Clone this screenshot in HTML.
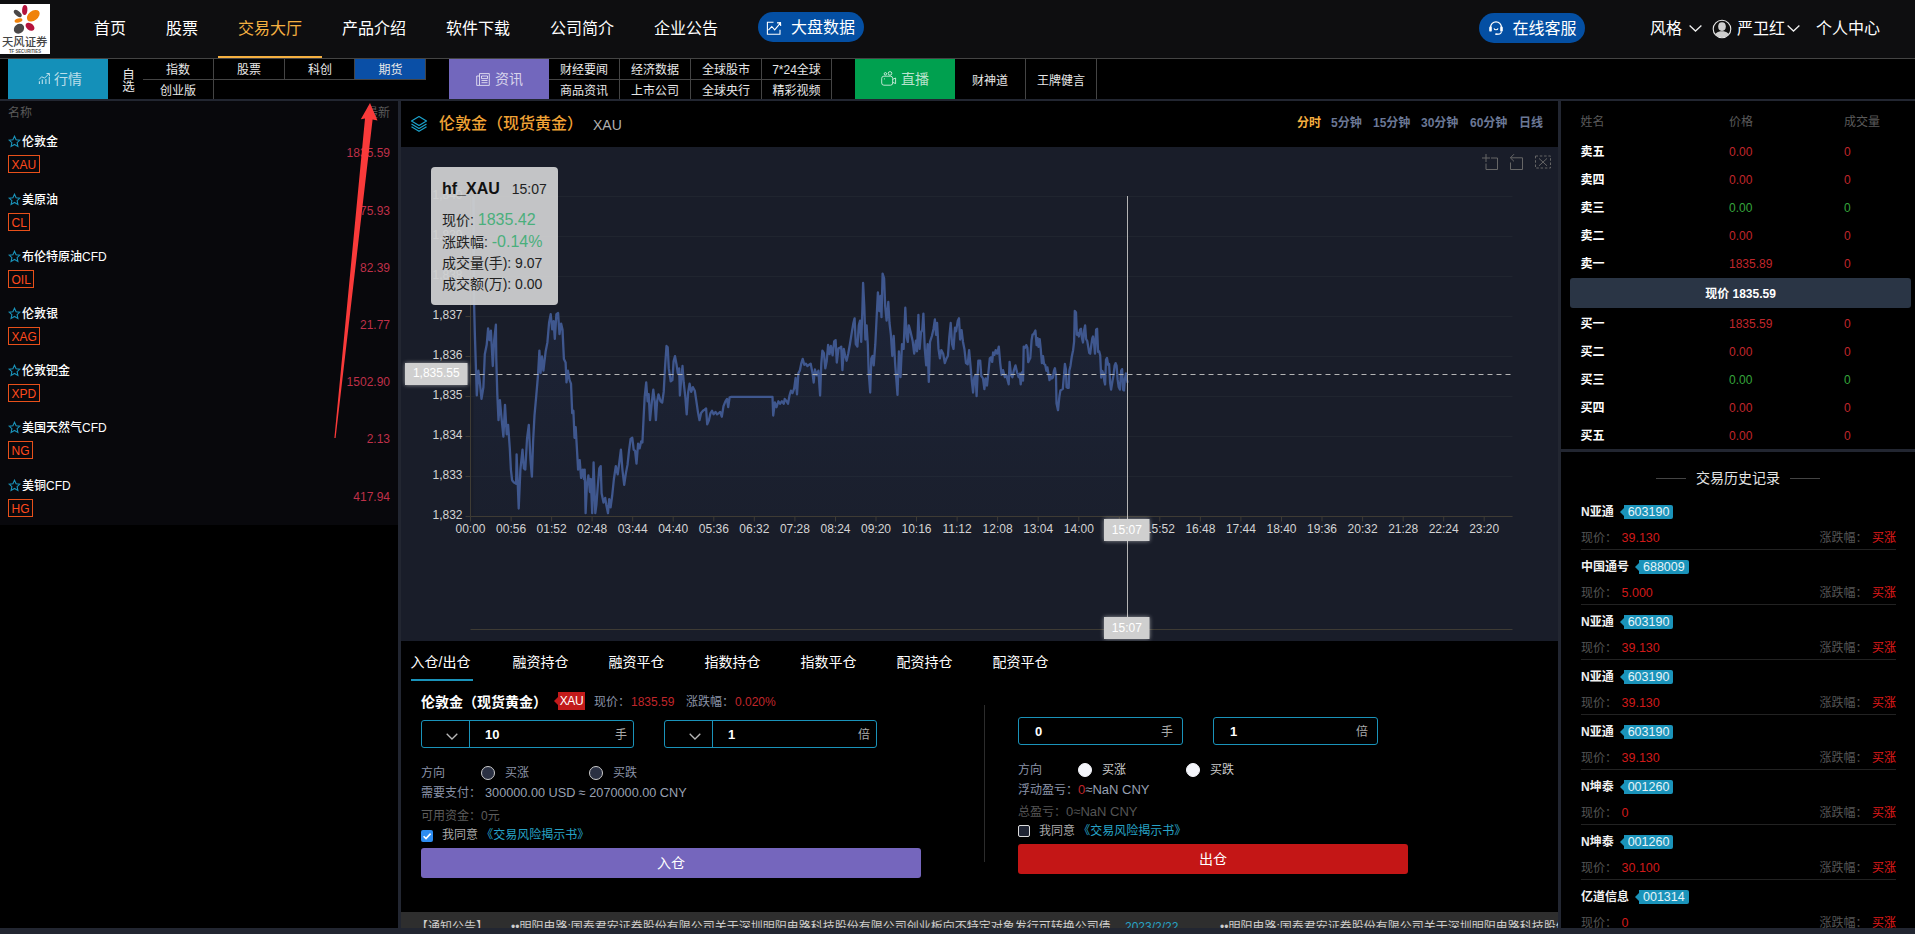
<!DOCTYPE html>
<html lang="zh-CN">
<head>
<meta charset="utf-8">
<title>交易大厅</title>
<style>
*{box-sizing:border-box;margin:0;padding:0}
html,body{width:1915px;height:934px;overflow:hidden;background:#000}
body{font-family:"Liberation Sans","Noto Sans CJK SC",sans-serif;color:#fff;font-size:13px;position:relative}
.abs{position:absolute}
/* header */
#hd{position:absolute;left:0;top:0;width:1915px;height:59px;background:#0e0e10;border-bottom:1px solid #444}
#logo{position:absolute;left:0;top:4px}
.nav{position:absolute;top:0;height:58px;line-height:57px;font-size:16px;color:#fff;text-align:center;white-space:nowrap}
.nav.on{color:#f5b041;border-bottom:2px solid #f5b041}
.pill{position:absolute;background:#044fa3;border-radius:15px;color:#fff;font-size:16px;white-space:nowrap}
/* subnav */
#sub{position:absolute;left:0;top:59px;width:1915px;height:40px;background:#000}
.blk{position:absolute;top:0;height:40px;width:100px;line-height:40px;text-align:center;font-size:14px;color:rgba(255,255,255,.72)}
.cell{position:absolute;height:20px;line-height:22px;font-size:12px;color:#e8e8e8;text-align:center;white-space:nowrap}
.ln{position:absolute;background:#444}
.ic{position:absolute}
.vt{position:absolute;font-size:12.5px;line-height:12px;color:#e8e8e8;width:13px;text-align:center}

.it{position:absolute;left:0;width:398px;height:57px}
.it .st{position:absolute;left:8px;top:8px}
.it .nm{position:absolute;left:22px;top:6px;font-size:12px;line-height:18px;color:#fff;font-weight:500;white-space:nowrap}
.it .cd{position:absolute;left:8px;top:28px;height:18px;line-height:18px;padding:0 2.5px;border:1px solid #e8501a;color:#ff4a1c;font-size:12px}
.it .pr{position:absolute;right:8px;top:17px;font-size:12px;line-height:18px;color:#bf3049}
.tf{position:absolute;top:12px;font-size:12px;line-height:20px;font-weight:700;color:#6b7896;white-space:nowrap}

.tab{position:absolute;top:10px;font-size:14px;line-height:22px;color:#fff;white-space:nowrap}
.lbl{color:#8a93a8;font-size:12px;white-space:nowrap}
.inp{position:absolute;height:28px;border:1px solid #1a93ba;border-radius:3px}
.inp i{position:absolute;top:0;width:1px;height:26px;background:#1a93ba}
.inp b{position:absolute;top:4px;font-size:13px;line-height:20px;color:#fff;font-weight:700}
.inp em{position:absolute;right:6px;top:4px;font-style:normal;font-size:12px;line-height:20px;color:#aaa}
.rd{position:absolute;width:14px;height:14px;border-radius:50%;background:#2a3042;border:1px solid #ccc}
.rd.w{background:#f4f5fa;border-color:#f4f5fa}

.or{position:absolute;left:0;width:354px;height:20px;line-height:20px;font-size:12px}
.or span{position:absolute;top:0;white-space:nowrap}
.or .o1{left:19.5px;color:#fff;font-weight:700}
.or .o2{left:168px}.or .o3{left:283px}
.or.r{color:#c0262b}.or.g{color:#35a53c}
.hi{position:absolute;left:20px;width:315px;height:51px;border-bottom:1px solid #222}
.hi .h1{position:absolute;left:0;top:3px;line-height:20px;white-space:nowrap}
.hi .h1 b{font-size:12px;color:#f0f0f0}
.hi .tg{position:relative;display:inline-block;margin-left:10px;height:14px;line-height:14px;padding:0 4px;background:#1a93ba;color:#e8f4f8;font-size:12.5px;vertical-align:middle;top:-1px;border-radius:0 2px 2px 0}
.hi .tg:before{content:"";position:absolute;left:-4px;top:3px;border-top:4px solid transparent;border-bottom:4px solid transparent;border-right:4px solid #1a93ba}
.hi .h2{position:absolute;left:0;top:29px;width:315px;line-height:20px;color:#555;font-size:12px;white-space:nowrap}
.hi .h2 em{font-style:normal;color:#d01a1a;font-size:12.5px;position:absolute;left:40.5px}
.hi .h2 u{text-decoration:none;position:absolute;right:0}
.hi .h2 i{font-style:normal;color:#e01a1a;margin-left:4.5px}
/* frame */
.fr{position:absolute;background:#222631}
</style>
</head>
<body>
<!-- HEADER -->
<div id="hd">
  <svg id="logo" viewBox="0 0 200 200" width="50" height="50">
    <rect width="200" height="200" fill="#fff"/>
    <ellipse cx="99" cy="24" rx="10.5" ry="20" fill="#b5123c" transform="rotate(4 99 24)"/>
    <ellipse cx="71" cy="38" rx="19" ry="10" fill="#4a4747" transform="rotate(42 71 38)"/>
    <ellipse cx="133" cy="47" rx="29" ry="19" fill="#f0820a" transform="rotate(-38 133 47)"/>
    <ellipse cx="74" cy="66" rx="16" ry="8" fill="#f0820a" transform="rotate(-14 74 66)"/>
    <ellipse cx="76" cy="99" rx="22" ry="18.5" fill="#4a4747" transform="rotate(-40 76 99)"/>
    <ellipse cx="120" cy="91" rx="20" ry="13.5" fill="#b5123c" transform="rotate(38 120 91)"/>
    <text x="99" y="167" font-size="44" font-weight="500" fill="#444" text-anchor="middle" font-family="'Liberation Sans','Noto Sans CJK SC',sans-serif" textLength="182" lengthAdjust="spacingAndGlyphs">天风证券</text>
    <text x="100" y="195" font-size="19" font-weight="700" fill="#555" text-anchor="middle" font-family="'Liberation Sans',sans-serif" textLength="128" lengthAdjust="spacingAndGlyphs">TF SECURITIES</text>
  </svg>
  <div class="nav" style="left:74px;width:72px">首页</div>
  <div class="nav" style="left:146px;width:72px">股票</div>
  <div class="nav on" style="left:218px;width:104px">交易大厅</div>
  <div class="nav" style="left:322px;width:104px">产品介绍</div>
  <div class="nav" style="left:426px;width:104px">软件下载</div>
  <div class="nav" style="left:530px;width:104px">公司简介</div>
  <div class="nav" style="left:634px;width:104px">企业公告</div>
  <div class="pill" style="left:758px;top:12px;width:106px;height:30px;line-height:31px;padding-left:33px"><svg class="ic" style="left:8px;top:8.5px" width="16" height="15" viewBox="0 0 16 15"><path d="M7.5 1.3H1.4V13.3H14V8.8" fill="none" stroke="#fff" stroke-width="1.1"/><path d="M2.4 9.2L5.8 5.5 8.7 8.8 14.3 2.2M11 1.9L14.5 1.7 14.7 5" fill="none" stroke="#fff" stroke-width="1.1"/></svg>大盘数据</div>
  <div class="pill" style="left:1479px;top:13px;width:106px;height:30px;line-height:31px;padding-left:33.5px"><svg class="ic" style="left:9px;top:7px" width="16" height="16" viewBox="0 0 16 16"><path d="M2.6 8.2V7.2a5.4 5.4 0 0 1 10.8 0v1" fill="none" stroke="#fff" stroke-width="1.3"/><rect x="1.2" y="6.6" width="2.6" height="5" rx="1.2" fill="#fff"/><rect x="12.2" y="6.6" width="2.6" height="5" rx="1.2" fill="#fff"/><path d="M13.4 11.4c0 2-2 2.8-4.4 2.8" fill="none" stroke="#fff" stroke-width="1.1"/><ellipse cx="8.4" cy="14.1" rx="1.4" ry=".9" fill="#fff"/><path d="M6 8.3c.5 2 3.5 2 4 0" fill="none" stroke="#fff" stroke-width="1.1"/></svg>在线客服</div>
  <div class="nav" style="left:1650px">风格</div>
  <svg class="ic" style="left:1689px;top:25px" width="13" height="7" viewBox="0 0 13 7"><path d="M.6 .6L6.5 6 12.4 .6" fill="none" stroke="#eee" stroke-width="1.3"/></svg>
  <svg class="ic" style="left:1712px;top:18.5px" width="20" height="20" viewBox="0 0 20 20"><defs><clipPath id="av"><circle cx="10" cy="10" r="8.6"/></clipPath></defs><circle cx="10" cy="10" r="8.8" fill="#111" stroke="#e8e8e8" stroke-width="1.1"/><g clip-path="url(#av)" fill="#cfcfcf"><ellipse cx="10" cy="7.6" rx="3.8" ry="4.3"/><path d="M2 19.5c.3-5 2.800-7.300 8-7.300s7.700 2.300 8 7.300z"/></g></svg>
  <div class="nav" style="left:1737px">严卫红</div>
  <svg class="ic" style="left:1787px;top:25px" width="13" height="7" viewBox="0 0 13 7"><path d="M.6 .6L6.5 6 12.4 .6" fill="none" stroke="#eee" stroke-width="1.3"/></svg>
  <div class="nav" style="left:1816px">个人中心</div>
</div>
<!-- SUBNAV -->
<div id="sub">
  <div class="blk" style="left:8px;background:#1490b9"><svg class="ic" width="13" height="12" viewBox="0 0 13 12" style="left:30px;top:14px"><path d="M1.4 8.300V10.900M4.300 6.400V10.900M7.900 6.100V10.900M11.300 3.800V10.900" stroke="currentColor" stroke-width="1.1" fill="none"/><path d="M1.100 6.500L3.600 3.800 6.600 5.100 11.100 .6M8.500 .5H11.300L11.500 3.100" stroke="currentColor" stroke-width="1" fill="none"/></svg><span style="margin-left:20px">行情</span></div>
  <div class="vt" style="left:122px;top:9.5px">自<br>选</div>
  <div class="cell" style="left:143px;top:0;width:70px">指数</div>
  <div class="cell" style="left:143px;top:21px;width:70px">创业版</div>
  <div class="cell" style="left:214px;top:0;width:70px">股票</div>
  <div class="cell" style="left:285px;top:0;width:70px">科创</div>
  <div class="cell" style="left:355px;top:0;width:71px;background:#0a4fa6">期货</div>
  <div class="ln" style="left:143px;top:20px;width:283px;height:1px"></div>
  <div class="ln" style="left:213px;top:0;width:1px;height:40px"></div>
  <div class="ln" style="left:284px;top:0;width:1px;height:20px"></div>
  <div class="ln" style="left:354px;top:0;width:1px;height:20px"></div>
  <div class="ln" style="left:425px;top:0;width:1px;height:20px"></div>

  <div class="blk" style="left:449px;background:#7267bd"><svg class="ic" width="14" height="13" viewBox="0 0 14 13" style="left:27px;top:14px"><path d="M3.5 .6h9.8v11.8H.7V3h2.8zM3.5 3v9" stroke="currentColor" stroke-width="1" fill="none"/><path d="M5.5 3h6v2.6h-6zM5.5 7.5h6M5.5 9.7h6" stroke="currentColor" stroke-width="1" fill="none"/></svg><span style="margin-left:20px">资讯</span></div>
  <div class="cell" style="left:549px;top:0;width:70px">财经要闻</div>
  <div class="cell" style="left:549px;top:21px;width:70px">商品资讯</div>
  <div class="cell" style="left:620px;top:0;width:70px">经济数据</div>
  <div class="cell" style="left:620px;top:21px;width:70px">上市公司</div>
  <div class="cell" style="left:691px;top:0;width:70px">全球股市</div>
  <div class="cell" style="left:691px;top:21px;width:70px">全球央行</div>
  <div class="cell" style="left:762px;top:0;width:69px">7*24全球</div>
  <div class="cell" style="left:762px;top:21px;width:69px">精彩视频</div>
  <div class="ln" style="left:549px;top:20px;width:283px;height:1px"></div>
  <div class="ln" style="left:619px;top:0;width:1px;height:40px"></div>
  <div class="ln" style="left:690px;top:0;width:1px;height:40px"></div>
  <div class="ln" style="left:761px;top:0;width:1px;height:40px"></div>
  <div class="ln" style="left:831px;top:0;width:1px;height:40px"></div>

  <div class="blk" style="left:855px;background:#00a04f"><svg class="ic" width="16" height="15" viewBox="0 0 16 15" style="left:26px;top:11.5px"><circle cx="4.400" cy="2.800" r="1.200" stroke="currentColor" fill="none"/><circle cx="9" cy="2.400" r="1.800" stroke="currentColor" fill="none"/><rect x=".7" y="5.200" width="11" height="9" rx="2.200" stroke="currentColor" fill="none"/><path d="M11.700 8.300L14.600 7V12.600L11.700 11.300" stroke="currentColor" fill="none" stroke-linejoin="round"/><circle cx="3.400" cy="7.800" r=".6" fill="currentColor"/></svg><span style="margin-left:20px">直播</span></div>
  <div class="cell" style="left:955px;top:11px;width:70px">财神道</div>
  <div class="cell" style="left:1026px;top:11px;width:70px">王牌健言</div>
  <div class="ln" style="left:1025px;top:0;width:1px;height:40px"></div>
  <div class="ln" style="left:1096px;top:0;width:1px;height:40px"></div>
</div>
<!-- FRAME LINES -->
<div class="fr" style="left:0;top:99px;width:1915px;height:2px"></div>
<div class="fr" style="left:398px;top:99px;width:3px;height:829px"></div>
<div class="fr" style="left:1558px;top:99px;width:3px;height:829px"></div>
<div class="fr" style="left:0;top:928px;width:1915px;height:6px"></div>
<!-- LEFT -->
<div id="left" class="abs" style="left:0;top:101px;width:398px;height:424px;background:#08080c">
  <div class="abs" style="left:8px;top:4px;font-size:12px;line-height:16px;color:#5a5a5a">名称</div>
  <div class="abs" style="right:8px;top:4px;font-size:12px;line-height:16px;color:#5a5a5a">最新</div>
  <div class="it" style="top:26.4px"><svg class="st" width="13" height="13" viewBox="0 0 13 13"><path d="M6.5 1.2l1.6 3.5 3.8.4-2.8 2.6.8 3.8-3.4-2-3.4 2 .8-3.8L1.1 5.1l3.8-.4z" fill="none" stroke="#1a93ba" stroke-width="1.1" stroke-linejoin="miter"/></svg><span class="nm">伦敦金</span><span class="cd">XAU</span><span class="pr">1835.59</span></div>
  <div class="it" style="top:83.6px"><svg class="st" width="13" height="13" viewBox="0 0 13 13"><path d="M6.5 1.2l1.6 3.5 3.8.4-2.8 2.6.8 3.8-3.4-2-3.4 2 .8-3.8L1.1 5.1l3.8-.4z" fill="none" stroke="#1a93ba" stroke-width="1.1" stroke-linejoin="miter"/></svg><span class="nm">美原油</span><span class="cd">CL</span><span class="pr">75.93</span></div>
  <div class="it" style="top:140.8px"><svg class="st" width="13" height="13" viewBox="0 0 13 13"><path d="M6.5 1.2l1.6 3.5 3.8.4-2.8 2.6.8 3.8-3.4-2-3.4 2 .8-3.8L1.1 5.1l3.8-.4z" fill="none" stroke="#1a93ba" stroke-width="1.1" stroke-linejoin="miter"/></svg><span class="nm">布伦特原油CFD</span><span class="cd">OIL</span><span class="pr">82.39</span></div>
  <div class="it" style="top:198.0px"><svg class="st" width="13" height="13" viewBox="0 0 13 13"><path d="M6.5 1.2l1.6 3.5 3.8.4-2.8 2.6.8 3.8-3.4-2-3.4 2 .8-3.8L1.1 5.1l3.8-.4z" fill="none" stroke="#1a93ba" stroke-width="1.1" stroke-linejoin="miter"/></svg><span class="nm">伦敦银</span><span class="cd">XAG</span><span class="pr">21.77</span></div>
  <div class="it" style="top:255.2px"><svg class="st" width="13" height="13" viewBox="0 0 13 13"><path d="M6.5 1.2l1.6 3.5 3.8.4-2.8 2.6.8 3.8-3.4-2-3.4 2 .8-3.8L1.1 5.1l3.8-.4z" fill="none" stroke="#1a93ba" stroke-width="1.1" stroke-linejoin="miter"/></svg><span class="nm">伦敦钯金</span><span class="cd">XPD</span><span class="pr">1502.90</span></div>
  <div class="it" style="top:312.4px"><svg class="st" width="13" height="13" viewBox="0 0 13 13"><path d="M6.5 1.2l1.6 3.5 3.8.4-2.8 2.6.8 3.8-3.4-2-3.4 2 .8-3.8L1.1 5.1l3.8-.4z" fill="none" stroke="#1a93ba" stroke-width="1.1" stroke-linejoin="miter"/></svg><span class="nm">美国天然气CFD</span><span class="cd">NG</span><span class="pr">2.13</span></div>
  <div class="it" style="top:369.6px"><svg class="st" width="13" height="13" viewBox="0 0 13 13"><path d="M6.5 1.2l1.6 3.5 3.8.4-2.8 2.6.8 3.8-3.4-2-3.4 2 .8-3.8L1.1 5.1l3.8-.4z" fill="none" stroke="#1a93ba" stroke-width="1.1" stroke-linejoin="miter"/></svg><span class="nm">美铜CFD</span><span class="cd">HG</span><span class="pr">417.94</span></div>
</div>
<svg class="abs" style="left:320px;top:100px" width="70" height="345" viewBox="320 100 70 345"><polygon points="370,103 377.5,120.5 372.6,119.6 335.6,438 334.4,438 365,118.6 360.8,119.2" fill="#f93a3a"/></svg>
<!-- CENTER -->
<div id="ctitle" class="abs" style="left:401px;top:101px;width:1157px;height:46px;background:#000">
  <svg class="abs" style="left:9px;top:14px" width="18" height="18" viewBox="0 0 18 18"><path d="M9 1.5L16.5 6 9 10.5 1.5 6z" fill="none" stroke="#1ba3cc" stroke-width="1.2" stroke-linejoin="round"/><path d="M1.5 9L9 13.5 16.5 9M1.5 11.8L9 16.3 16.5 11.8" fill="none" stroke="#1ba3cc" stroke-width="1.2" stroke-linejoin="round"/></svg>
  <div class="abs" style="left:38px;top:11px;font-size:16px;line-height:24px;color:#f0a335;font-weight:500;white-space:nowrap">伦敦金（现货黄金）</div>
  <div class="abs" style="left:192px;top:12px;font-size:14px;line-height:24px;color:#b0b0b0">XAU</div>
  <div class="tf" style="left:896px;color:#f7b040">分时</div>
  <div class="tf" style="left:930px">5分钟</div>
  <div class="tf" style="left:972px">15分钟</div>
  <div class="tf" style="left:1020px">30分钟</div>
  <div class="tf" style="left:1069px">60分钟</div>
  <div class="tf" style="left:1118px">日线</div>
</div>
<div id="chart" class="abs" style="left:401px;top:147px;width:1157px;height:494px;background:#191d29"></div>
<svg class="abs" style="left:401px;top:147px" width="1157" height="494" viewBox="401 147 1157 494" font-family="'Liberation Sans','Noto Sans CJK SC',sans-serif" font-size="12">
<defs><linearGradient id="ag" x1="0" y1="0" x2="0" y2="1"><stop offset="0" stop-color="#3a5490" stop-opacity=".30"/><stop offset=".35" stop-color="#2e4478" stop-opacity=".17"/><stop offset="1" stop-color="#2a3c66" stop-opacity=".07"/></linearGradient></defs>
<path d="M470.5 196.5H1512.5" stroke="#20252f" stroke-width="1"/>
<path d="M470.5 236.5H1512.5" stroke="#20252f" stroke-width="1"/>
<path d="M470.5 276.5H1512.5" stroke="#20252f" stroke-width="1"/>
<path d="M470.5 316.5H1512.5" stroke="#20252f" stroke-width="1"/>
<path d="M470.5 356.5H1512.5" stroke="#20252f" stroke-width="1"/>
<path d="M470.5 396.5H1512.5" stroke="#20252f" stroke-width="1"/>
<path d="M470.5 436.5H1512.5" stroke="#20252f" stroke-width="1"/>
<path d="M470.5 476.5H1512.5" stroke="#20252f" stroke-width="1"/>
<path d="M470.5 516.5H1512.5" stroke="#20252f" stroke-width="1"/>
<path d="M465.5 196.5H470.5" stroke="#3e3b34"/>
<text x="462.5" y="199.4" text-anchor="end" fill="#d4d4d4">1,840</text>
<path d="M465.5 236.5H470.5" stroke="#3e3b34"/>
<text x="462.5" y="239.4" text-anchor="end" fill="#d4d4d4">1,839</text>
<path d="M465.5 276.5H470.5" stroke="#3e3b34"/>
<text x="462.5" y="279.4" text-anchor="end" fill="#d4d4d4">1,838</text>
<path d="M465.5 316.5H470.5" stroke="#3e3b34"/>
<text x="462.5" y="319.4" text-anchor="end" fill="#d4d4d4">1,837</text>
<path d="M465.5 356.5H470.5" stroke="#3e3b34"/>
<text x="462.5" y="359.4" text-anchor="end" fill="#d4d4d4">1,836</text>
<path d="M465.5 396.5H470.5" stroke="#3e3b34"/>
<text x="462.5" y="399.4" text-anchor="end" fill="#d4d4d4">1,835</text>
<path d="M465.5 436.5H470.5" stroke="#3e3b34"/>
<text x="462.5" y="439.4" text-anchor="end" fill="#d4d4d4">1,834</text>
<path d="M465.5 476.5H470.5" stroke="#3e3b34"/>
<text x="462.5" y="479.4" text-anchor="end" fill="#d4d4d4">1,833</text>
<path d="M465.5 516.5H470.5" stroke="#3e3b34"/>
<text x="462.5" y="519.4" text-anchor="end" fill="#d4d4d4">1,832</text>
<path d="M470.5 196V516.5" stroke="#3e3b34"/>
<path d="M470.5 516.5H1512.5" stroke="#3e3b34"/>
<path d="M470.5 629.5H1512.5" stroke="#3e3b34"/>
<polygon points="473.5,516 473.5,196.3 474.0,300.0 474.9,335.3 476.8,395.4 478.4,370.7 479.6,380.1 481.5,398.9 483.4,387.2 484.8,354.2 486.7,344.8 488.1,328.3 489.5,340.0 490.9,330.6 492.8,366.0 494.2,340.0 495.9,324.7 496.3,358.9 497.3,394.2 498.5,420.1 499.9,400.1 501.5,417.8 503.4,436.6 505.0,404.8 506.7,434.3 508.1,424.9 509.8,448.4 510.9,469.6 512.1,480.2 514.0,482.6 516.1,483.7 516.6,454.3 518.7,508.5 520.4,469.6 522.5,449.6 523.9,468.4 525.3,469.6 527.0,439.0 528.8,424.9 530.5,460.2 531.9,476.7 533.1,441.3 534.5,415.4 536.4,394.2 538.0,375.4 539.4,350.6 540.6,373.0 542.0,356.5 543.4,370.7 545.6,351.8 547.4,342.4 549.1,322.4 550.7,314.1 552.2,329.4 553.6,321.2 554.8,338.9 556.4,314.1 558.1,313.0 559.5,334.2 561.1,323.6 562.5,329.4 563.9,358.9 565.6,362.4 566.5,382.4 567.9,370.7 569.6,380.1 571.0,383.6 572.2,413.1 573.4,410.7 574.5,437.8 575.7,427.2 576.9,448.4 578.1,469.6 579.7,460.2 581.1,477.9 582.8,469.6 584.0,479.0 584.7,469.6 585.6,513.2 587.0,483.7 588.4,475.5 589.9,492.0 590.8,479.0 592.2,513.2 593.6,462.5 595.3,513.2 596.4,504.9 597.6,488.5 599.3,468.4 600.7,466.1 601.6,493.2 603.5,502.6 605.2,497.9 606.3,504.9 608.0,513.2 609.2,499.1 610.6,507.3 612.2,495.5 613.9,479.0 615.8,466.1 617.7,474.3 619.3,462.5 620.9,449.6 622.4,469.6 624.2,484.9 625.9,473.1 627.5,464.9 629.0,450.8 630.6,439.0 632.3,437.8 633.7,449.6 635.1,450.8 636.5,463.7 638.1,443.7 639.6,448.4 641.2,441.3 642.4,442.5 643.6,417.8 644.7,396.6 646.2,382.4 647.6,401.3 648.7,394.2 650.0,420.2 651.9,401.3 653.3,389.6 654.7,401.3 655.9,420.2 657.1,401.3 658.5,394.3 660.6,401.3 662.2,402.5 663.7,391.9 665.1,366.0 666.5,346.0 667.7,347.2 668.8,368.4 670.7,381.3 672.4,380.1 673.6,361.3 675.0,356.1 676.4,363.7 677.8,373.1 679.2,368.4 679.9,395.5 681.3,377.8 682.5,366.0 683.7,382.5 685.3,396.6 686.7,414.3 688.2,391.9 689.6,383.7 691.2,391.9 692.9,387.2 694.8,390.7 696.4,401.3 698.1,413.1 699.5,420.2 701.1,413.1 703.0,410.8 704.7,409.6 706.1,408.4 707.2,424.4 708.9,420.2 710.5,413.1 712.0,410.8 713.6,414.3 715.5,411.9 717.1,414.3 718.8,413.1 720.2,411.9 721.8,416.7 723.5,406.1 725.4,401.3 727.0,399.0 728.2,407.2 729.6,397.3 731.3,396.9 772.5,396.9 773.2,415.5 774.9,402.5 776.5,407.2 778.4,401.3 780.0,403.7 781.9,401.3 783.8,403.7 784.7,399.0 786.6,401.3 788.0,403.7 789.5,395.5 790.9,390.7 792.5,393.1 794.2,388.4 795.6,377.8 797.0,394.3 798.4,373.1 799.8,370.7 801.2,363.7 802.7,358.9 804.3,364.8 805.9,363.7 807.4,366.0 809.0,364.8 810.7,363.7 812.5,373.1 813.7,382.5 814.9,369.5 816.8,375.4 818.4,370.7 820.1,395.5 821.3,363.7 822.4,350.7 823.9,353.1 825.3,368.4 826.7,361.3 828.1,344.8 829.5,354.2 830.9,346.0 832.6,355.4 834.2,341.3 835.6,340.1 836.8,362.5 838.5,348.3 840.0,347.8 841.2,346.6 842.4,370.1 843.8,348.9 845.2,356.0 846.6,360.7 848.2,353.7 849.9,344.2 851.8,332.4 853.4,323.0 854.6,318.3 855.8,344.2 857.4,346.6 858.8,325.4 860.0,320.7 861.2,341.9 862.4,308.9 863.1,283.0 864.3,306.5 865.4,339.5 866.6,325.4 867.8,344.2 868.7,372.5 870.2,392.5 871.3,358.4 872.5,356.0 873.7,365.4 875.3,344.2 876.7,316.0 877.9,292.4 879.3,311.2 880.5,295.9 881.5,317.1 882.6,273.6 884.1,278.3 885.2,306.5 886.6,320.7 888.3,301.8 889.5,323.0 890.9,334.8 892.3,356.0 893.7,336.0 895.1,363.1 896.5,381.9 897.5,394.9 898.9,351.3 900.5,377.2 902.0,344.2 903.6,348.9 905.3,307.7 906.7,337.2 907.8,341.9 908.8,325.4 910.7,332.4 912.6,340.7 914.2,353.7 915.9,340.7 917.0,351.3 918.4,314.8 919.6,348.9 921.0,332.4 922.2,330.1 923.4,313.6 924.8,348.9 926.2,365.4 927.6,344.2 928.8,381.9 930.0,341.9 931.9,336.0 933.5,328.9 934.9,319.5 936.1,334.8 937.1,323.0 938.5,348.9 939.9,358.4 941.3,350.1 943.2,353.7 944.8,363.1 946.5,358.4 947.9,356.0 949.3,337.2 950.7,323.0 952.1,344.2 953.5,348.9 955.0,327.7 956.1,331.3 957.8,320.7 959.0,318.3 960.1,339.5 961.6,330.1 963.0,341.9 964.4,348.9 966.0,363.1 967.7,364.3 969.1,350.1 970.7,367.8 971.9,381.9 973.1,392.5 974.3,377.2 975.5,374.9 976.6,396.1 978.3,360.7 980.2,360.7 981.3,376.0 983.0,378.4 984.4,389.0 985.6,378.4 987.0,385.5 988.4,372.5 989.8,358.4 991.0,357.2 992.2,361.9 993.1,352.5 994.5,354.8 995.7,350.1 997.1,353.7 998.8,346.6 1000.2,363.1 1001.6,374.9 1003.0,370.1 1004.9,377.2 1006.3,374.9 1007.5,379.6 1008.7,384.3 1009.6,361.9 1011.0,374.9 1012.4,377.2 1013.9,370.1 1015.5,365.4 1017.1,372.5 1018.6,377.2 1019.7,373.7 1020.7,384.3 1021.9,372.5 1023.0,380.7 1023.7,346.6 1023.8,346.8 1025.1,347.7 1026.3,345.1 1027.4,347.7 1028.2,362.2 1029.4,359.7 1030.3,357.9 1031.6,340.0 1032.5,334.8 1033.7,334.0 1035.4,330.5 1036.6,345.1 1037.6,338.2 1038.5,346.8 1039.7,339.1 1040.7,348.5 1041.9,363.1 1043.0,356.2 1044.0,363.9 1045.2,364.8 1046.4,370.8 1047.4,367.4 1048.4,373.4 1049.5,380.2 1050.5,375.9 1051.7,378.5 1052.9,377.6 1053.9,370.8 1054.9,368.2 1056.0,375.9 1056.5,403.3 1058.0,410.2 1059.4,396.5 1060.4,390.5 1061.8,389.6 1062.8,388.8 1063.9,375.9 1064.9,363.9 1065.9,369.1 1066.6,387.1 1067.6,387.9 1068.7,387.9 1069.3,370.8 1070.5,365.7 1071.7,357.1 1073.1,350.2 1074.1,341.7 1074.8,310.8 1076.0,312.5 1076.9,334.8 1077.9,333.1 1078.9,336.5 1080.0,329.7 1081.0,328.8 1082.0,338.2 1083.0,342.5 1084.2,329.7 1085.1,325.4 1086.1,339.1 1087.2,340.8 1088.2,346.8 1089.2,352.8 1090.2,353.7 1091.3,345.1 1092.3,338.2 1093.0,336.5 1094.0,342.5 1095.0,353.7 1096.1,329.7 1097.1,328.8 1098.1,351.9 1099.1,351.1 1100.2,355.4 1101.2,377.6 1102.2,370.8 1103.3,373.4 1104.3,381.1 1105.1,384.5 1106.0,359.7 1107.0,357.9 1108.1,364.8 1109.1,363.9 1110.1,382.8 1111.1,389.6 1112.2,382.8 1113.4,375.9 1114.6,365.7 1115.6,363.1 1116.6,365.7 1117.6,379.4 1118.7,387.1 1119.9,389.6 1121.1,370.8 1122.1,369.1 1123.1,389.6 1124.0,390.5 1124.8,379.4 1125.9,373.4 1126.6,378.5 1127.6,382.8 1127.6,516" fill="url(#ag)"/>
<polyline points="473.5,196.3 474.0,300.0 474.9,335.3 476.8,395.4 478.4,370.7 479.6,380.1 481.5,398.9 483.4,387.2 484.8,354.2 486.7,344.8 488.1,328.3 489.5,340.0 490.9,330.6 492.8,366.0 494.2,340.0 495.9,324.7 496.3,358.9 497.3,394.2 498.5,420.1 499.9,400.1 501.5,417.8 503.4,436.6 505.0,404.8 506.7,434.3 508.1,424.9 509.8,448.4 510.9,469.6 512.1,480.2 514.0,482.6 516.1,483.7 516.6,454.3 518.7,508.5 520.4,469.6 522.5,449.6 523.9,468.4 525.3,469.6 527.0,439.0 528.8,424.9 530.5,460.2 531.9,476.7 533.1,441.3 534.5,415.4 536.4,394.2 538.0,375.4 539.4,350.6 540.6,373.0 542.0,356.5 543.4,370.7 545.6,351.8 547.4,342.4 549.1,322.4 550.7,314.1 552.2,329.4 553.6,321.2 554.8,338.9 556.4,314.1 558.1,313.0 559.5,334.2 561.1,323.6 562.5,329.4 563.9,358.9 565.6,362.4 566.5,382.4 567.9,370.7 569.6,380.1 571.0,383.6 572.2,413.1 573.4,410.7 574.5,437.8 575.7,427.2 576.9,448.4 578.1,469.6 579.7,460.2 581.1,477.9 582.8,469.6 584.0,479.0 584.7,469.6 585.6,513.2 587.0,483.7 588.4,475.5 589.9,492.0 590.8,479.0 592.2,513.2 593.6,462.5 595.3,513.2 596.4,504.9 597.6,488.5 599.3,468.4 600.7,466.1 601.6,493.2 603.5,502.6 605.2,497.9 606.3,504.9 608.0,513.2 609.2,499.1 610.6,507.3 612.2,495.5 613.9,479.0 615.8,466.1 617.7,474.3 619.3,462.5 620.9,449.6 622.4,469.6 624.2,484.9 625.9,473.1 627.5,464.9 629.0,450.8 630.6,439.0 632.3,437.8 633.7,449.6 635.1,450.8 636.5,463.7 638.1,443.7 639.6,448.4 641.2,441.3 642.4,442.5 643.6,417.8 644.7,396.6 646.2,382.4 647.6,401.3 648.7,394.2 650.0,420.2 651.9,401.3 653.3,389.6 654.7,401.3 655.9,420.2 657.1,401.3 658.5,394.3 660.6,401.3 662.2,402.5 663.7,391.9 665.1,366.0 666.5,346.0 667.7,347.2 668.8,368.4 670.7,381.3 672.4,380.1 673.6,361.3 675.0,356.1 676.4,363.7 677.8,373.1 679.2,368.4 679.9,395.5 681.3,377.8 682.5,366.0 683.7,382.5 685.3,396.6 686.7,414.3 688.2,391.9 689.6,383.7 691.2,391.9 692.9,387.2 694.8,390.7 696.4,401.3 698.1,413.1 699.5,420.2 701.1,413.1 703.0,410.8 704.7,409.6 706.1,408.4 707.2,424.4 708.9,420.2 710.5,413.1 712.0,410.8 713.6,414.3 715.5,411.9 717.1,414.3 718.8,413.1 720.2,411.9 721.8,416.7 723.5,406.1 725.4,401.3 727.0,399.0 728.2,407.2 729.6,397.3 731.3,396.9 772.5,396.9 773.2,415.5 774.9,402.5 776.5,407.2 778.4,401.3 780.0,403.7 781.9,401.3 783.8,403.7 784.7,399.0 786.6,401.3 788.0,403.7 789.5,395.5 790.9,390.7 792.5,393.1 794.2,388.4 795.6,377.8 797.0,394.3 798.4,373.1 799.8,370.7 801.2,363.7 802.7,358.9 804.3,364.8 805.9,363.7 807.4,366.0 809.0,364.8 810.7,363.7 812.5,373.1 813.7,382.5 814.9,369.5 816.8,375.4 818.4,370.7 820.1,395.5 821.3,363.7 822.4,350.7 823.9,353.1 825.3,368.4 826.7,361.3 828.1,344.8 829.5,354.2 830.9,346.0 832.6,355.4 834.2,341.3 835.6,340.1 836.8,362.5 838.5,348.3 840.0,347.8 841.2,346.6 842.4,370.1 843.8,348.9 845.2,356.0 846.6,360.7 848.2,353.7 849.9,344.2 851.8,332.4 853.4,323.0 854.6,318.3 855.8,344.2 857.4,346.6 858.8,325.4 860.0,320.7 861.2,341.9 862.4,308.9 863.1,283.0 864.3,306.5 865.4,339.5 866.6,325.4 867.8,344.2 868.7,372.5 870.2,392.5 871.3,358.4 872.5,356.0 873.7,365.4 875.3,344.2 876.7,316.0 877.9,292.4 879.3,311.2 880.5,295.9 881.5,317.1 882.6,273.6 884.1,278.3 885.2,306.5 886.6,320.7 888.3,301.8 889.5,323.0 890.9,334.8 892.3,356.0 893.7,336.0 895.1,363.1 896.5,381.9 897.5,394.9 898.9,351.3 900.5,377.2 902.0,344.2 903.6,348.9 905.3,307.7 906.7,337.2 907.8,341.9 908.8,325.4 910.7,332.4 912.6,340.7 914.2,353.7 915.9,340.7 917.0,351.3 918.4,314.8 919.6,348.9 921.0,332.4 922.2,330.1 923.4,313.6 924.8,348.9 926.2,365.4 927.6,344.2 928.8,381.9 930.0,341.9 931.9,336.0 933.5,328.9 934.9,319.5 936.1,334.8 937.1,323.0 938.5,348.9 939.9,358.4 941.3,350.1 943.2,353.7 944.8,363.1 946.5,358.4 947.9,356.0 949.3,337.2 950.7,323.0 952.1,344.2 953.5,348.9 955.0,327.7 956.1,331.3 957.8,320.7 959.0,318.3 960.1,339.5 961.6,330.1 963.0,341.9 964.4,348.9 966.0,363.1 967.7,364.3 969.1,350.1 970.7,367.8 971.9,381.9 973.1,392.5 974.3,377.2 975.5,374.9 976.6,396.1 978.3,360.7 980.2,360.7 981.3,376.0 983.0,378.4 984.4,389.0 985.6,378.4 987.0,385.5 988.4,372.5 989.8,358.4 991.0,357.2 992.2,361.9 993.1,352.5 994.5,354.8 995.7,350.1 997.1,353.7 998.8,346.6 1000.2,363.1 1001.6,374.9 1003.0,370.1 1004.9,377.2 1006.3,374.9 1007.5,379.6 1008.7,384.3 1009.6,361.9 1011.0,374.9 1012.4,377.2 1013.9,370.1 1015.5,365.4 1017.1,372.5 1018.6,377.2 1019.7,373.7 1020.7,384.3 1021.9,372.5 1023.0,380.7 1023.7,346.6 1023.8,346.8 1025.1,347.7 1026.3,345.1 1027.4,347.7 1028.2,362.2 1029.4,359.7 1030.3,357.9 1031.6,340.0 1032.5,334.8 1033.7,334.0 1035.4,330.5 1036.6,345.1 1037.6,338.2 1038.5,346.8 1039.7,339.1 1040.7,348.5 1041.9,363.1 1043.0,356.2 1044.0,363.9 1045.2,364.8 1046.4,370.8 1047.4,367.4 1048.4,373.4 1049.5,380.2 1050.5,375.9 1051.7,378.5 1052.9,377.6 1053.9,370.8 1054.9,368.2 1056.0,375.9 1056.5,403.3 1058.0,410.2 1059.4,396.5 1060.4,390.5 1061.8,389.6 1062.8,388.8 1063.9,375.9 1064.9,363.9 1065.9,369.1 1066.6,387.1 1067.6,387.9 1068.7,387.9 1069.3,370.8 1070.5,365.7 1071.7,357.1 1073.1,350.2 1074.1,341.7 1074.8,310.8 1076.0,312.5 1076.9,334.8 1077.9,333.1 1078.9,336.5 1080.0,329.7 1081.0,328.8 1082.0,338.2 1083.0,342.5 1084.2,329.7 1085.1,325.4 1086.1,339.1 1087.2,340.8 1088.2,346.8 1089.2,352.8 1090.2,353.7 1091.3,345.1 1092.3,338.2 1093.0,336.5 1094.0,342.5 1095.0,353.7 1096.1,329.7 1097.1,328.8 1098.1,351.9 1099.1,351.1 1100.2,355.4 1101.2,377.6 1102.2,370.8 1103.3,373.4 1104.3,381.1 1105.1,384.5 1106.0,359.7 1107.0,357.9 1108.1,364.8 1109.1,363.9 1110.1,382.8 1111.1,389.6 1112.2,382.8 1113.4,375.9 1114.6,365.7 1115.6,363.1 1116.6,365.7 1117.6,379.4 1118.7,387.1 1119.9,389.6 1121.1,370.8 1122.1,369.1 1123.1,389.6 1124.0,390.5 1124.8,379.4 1125.9,373.4 1126.6,378.5 1127.6,382.8" fill="none" stroke="#3f578e" stroke-width="2.3" stroke-linejoin="round"/>
<path d="M470.5 516.5V521.5" stroke="#3e3b34"/>
<text x="470.5" y="533.2" text-anchor="middle" fill="#d4d4d4">00:00</text>
<path d="M511.1 516.5V521.5" stroke="#3e3b34"/>
<text x="511.1" y="533.2" text-anchor="middle" fill="#d4d4d4">00:56</text>
<path d="M551.6 516.5V521.5" stroke="#3e3b34"/>
<text x="551.6" y="533.2" text-anchor="middle" fill="#d4d4d4">01:52</text>
<path d="M592.1 516.5V521.5" stroke="#3e3b34"/>
<text x="592.1" y="533.2" text-anchor="middle" fill="#d4d4d4">02:48</text>
<path d="M632.7 516.5V521.5" stroke="#3e3b34"/>
<text x="632.7" y="533.2" text-anchor="middle" fill="#d4d4d4">03:44</text>
<path d="M673.2 516.5V521.5" stroke="#3e3b34"/>
<text x="673.2" y="533.2" text-anchor="middle" fill="#d4d4d4">04:40</text>
<path d="M713.8 516.5V521.5" stroke="#3e3b34"/>
<text x="713.8" y="533.2" text-anchor="middle" fill="#d4d4d4">05:36</text>
<path d="M754.3 516.5V521.5" stroke="#3e3b34"/>
<text x="754.3" y="533.2" text-anchor="middle" fill="#d4d4d4">06:32</text>
<path d="M794.9 516.5V521.5" stroke="#3e3b34"/>
<text x="794.9" y="533.2" text-anchor="middle" fill="#d4d4d4">07:28</text>
<path d="M835.5 516.5V521.5" stroke="#3e3b34"/>
<text x="835.5" y="533.2" text-anchor="middle" fill="#d4d4d4">08:24</text>
<path d="M876.0 516.5V521.5" stroke="#3e3b34"/>
<text x="876.0" y="533.2" text-anchor="middle" fill="#d4d4d4">09:20</text>
<path d="M916.5 516.5V521.5" stroke="#3e3b34"/>
<text x="916.5" y="533.2" text-anchor="middle" fill="#d4d4d4">10:16</text>
<path d="M957.1 516.5V521.5" stroke="#3e3b34"/>
<text x="957.1" y="533.2" text-anchor="middle" fill="#d4d4d4">11:12</text>
<path d="M997.6 516.5V521.5" stroke="#3e3b34"/>
<text x="997.6" y="533.2" text-anchor="middle" fill="#d4d4d4">12:08</text>
<path d="M1038.2 516.5V521.5" stroke="#3e3b34"/>
<text x="1038.2" y="533.2" text-anchor="middle" fill="#d4d4d4">13:04</text>
<path d="M1078.8 516.5V521.5" stroke="#3e3b34"/>
<text x="1078.8" y="533.2" text-anchor="middle" fill="#d4d4d4">14:00</text>
<path d="M1119.3 516.5V521.5" stroke="#3e3b34"/>
<text x="1119.3" y="533.2" text-anchor="middle" fill="#d4d4d4">14:56</text>
<path d="M1159.8 516.5V521.5" stroke="#3e3b34"/>
<text x="1159.8" y="533.2" text-anchor="middle" fill="#d4d4d4">15:52</text>
<path d="M1200.4 516.5V521.5" stroke="#3e3b34"/>
<text x="1200.4" y="533.2" text-anchor="middle" fill="#d4d4d4">16:48</text>
<path d="M1240.9 516.5V521.5" stroke="#3e3b34"/>
<text x="1240.9" y="533.2" text-anchor="middle" fill="#d4d4d4">17:44</text>
<path d="M1281.5 516.5V521.5" stroke="#3e3b34"/>
<text x="1281.5" y="533.2" text-anchor="middle" fill="#d4d4d4">18:40</text>
<path d="M1322.0 516.5V521.5" stroke="#3e3b34"/>
<text x="1322.0" y="533.2" text-anchor="middle" fill="#d4d4d4">19:36</text>
<path d="M1362.6 516.5V521.5" stroke="#3e3b34"/>
<text x="1362.6" y="533.2" text-anchor="middle" fill="#d4d4d4">20:32</text>
<path d="M1403.2 516.5V521.5" stroke="#3e3b34"/>
<text x="1403.2" y="533.2" text-anchor="middle" fill="#d4d4d4">21:28</text>
<path d="M1443.7 516.5V521.5" stroke="#3e3b34"/>
<text x="1443.7" y="533.2" text-anchor="middle" fill="#d4d4d4">22:24</text>
<path d="M1484.2 516.5V521.5" stroke="#3e3b34"/>
<text x="1484.2" y="533.2" text-anchor="middle" fill="#d4d4d4">23:20</text>
<path d="M470.5 374.5H1512.5" stroke="#b4b4b4" stroke-width="1" stroke-dasharray="5 4"/>
<path d="M1127.5 196V629" stroke="#b4b4b4" stroke-width="1"/>
<g filter="drop-shadow(0 0 2px rgba(255,255,255,.55))"><rect x="405" y="363" width="62.5" height="22" fill="#cfcfcf"/><rect x="1104" y="519" width="45.5" height="22" fill="#cfcfcf"/><rect x="1104" y="617" width="45.5" height="22" fill="#cfcfcf"/></g>
<text x="436.3" y="377.4" text-anchor="middle" fill="#fff">1,835.55</text>
<text x="1126.8" y="533.6" text-anchor="middle" fill="#fff">15:07</text>
<text x="1126.8" y="631.6" text-anchor="middle" fill="#fff">15:07</text>
<g stroke="#666" fill="none" stroke-width="1"><path d="M1482 158H1490M1486 154V162M1491 158H1497.5V169.5H1486V163.5"/><path d="M1514 154.2L1510.4 157.8L1514 161.4M1510.4 157.8H1522.5V169.5H1510.5V162.5"/><rect x="1535.5" y="156" width="15" height="12" stroke-dasharray="2.5 1.8"/><path d="M1539 158.4L1547 165.8M1547 158.4L1539 165.8"/></g>
</svg>
<div id="tip" class="abs" style="left:431px;top:167px;width:127px;height:138px;background:rgba(206,207,208,.94);border-radius:4px;color:#222;font-size:14px;line-height:20px;white-space:nowrap">
  <div class="abs" style="left:11px;top:10px;line-height:24px"><b style="font-size:16px;color:#111">hf_XAU</b><span style="margin-left:12px">15:07</span></div>
  <div class="abs" style="left:11px;top:42.5px">现价: <span style="font-size:16px;color:#4aaf7c">1835.42</span></div>
  <div class="abs" style="left:11px;top:65px">涨跌幅: <span style="font-size:16px;color:#4aaf7c">-0.14%</span></div>
  <div class="abs" style="left:11px;top:86px">成交量(手): 9.07</div>
  <div class="abs" style="left:11px;top:107px">成交额(万): 0.00</div>
</div>
<div id="trade" class="abs" style="left:401px;top:641px;width:1157px;height:271px;background:#000;font-size:12px">
  <div class="tab" style="left:9.5px">入仓/出仓</div><div class="tab" style="left:111.5px">融资持仓</div><div class="tab" style="left:207.5px">融资平仓</div><div class="tab" style="left:303.5px">指数持仓</div><div class="tab" style="left:399.5px">指数平仓</div><div class="tab" style="left:495.5px">配资持仓</div><div class="tab" style="left:591.5px">配资平仓</div>
  <div class="abs" style="left:10px;top:38px;width:62px;height:2px;background:#1a93ba"></div>
  <div class="abs" style="left:20px;top:50px;font-size:14px;line-height:22px;font-weight:700;color:#fff;white-space:nowrap">伦敦金（现货黄金）</div>
  <div class="abs" style="left:157px;top:50.7px;width:27px;height:18px;background:#c21a1a;color:#fff;font-size:12px;line-height:18px;text-align:center;letter-spacing:-.4px">XAU</div>
  <div class="abs" style="left:153px;top:55.7px;width:0;height:0;border-top:4px solid transparent;border-bottom:4px solid transparent;border-right:4px solid #c21a1a"></div>
  <div class="abs lbl" style="left:193px;top:51px;line-height:20px">现价：<span style="color:#c0262b;margin-left:1px">1835.59</span></div>
  <div class="abs lbl" style="left:285px;top:51px;line-height:20px">涨跌幅：<span style="color:#c0262b;margin-left:1px">0.020%</span></div>

  <div class="inp" style="left:20px;top:79px;width:213px"><svg class="abs" style="left:23.5px;top:11.5px" width="12" height="7" viewBox="0 0 12 7"><path d="M.7 .7L6 6 11.3 .7" fill="none" stroke="#b8b8b8" stroke-width="1.3"/></svg><i style="left:46.5px"></i><b style="left:63px">10</b><em>手</em></div>
  <div class="inp" style="left:263px;top:79px;width:213px"><svg class="abs" style="left:23.5px;top:11.5px" width="12" height="7" viewBox="0 0 12 7"><path d="M.7 .7L6 6 11.3 .7" fill="none" stroke="#b8b8b8" stroke-width="1.3"/></svg><i style="left:46.5px"></i><b style="left:63px">1</b><em>倍</em></div>
  <div class="abs lbl" style="left:20px;top:122px;line-height:20px">方向</div>
  <div class="rd" style="left:80px;top:124.5px"></div><div class="abs lbl" style="left:104px;top:122px;line-height:20px">买涨</div>
  <div class="rd" style="left:188px;top:124.5px"></div><div class="abs lbl" style="left:212px;top:122px;line-height:20px">买跌</div>
  <div class="abs" style="left:20px;top:142px;line-height:20px;font-size:12.7px;color:#98a1b3;white-space:nowrap"><span style="font-size:12px;color:#8a93a8">需要支付：</span><span style="margin-left:4px">300000.00 USD ≈ 2070000.00 CNY</span></div>
  <div class="abs" style="left:20px;top:165px;line-height:20px;font-size:12px;color:#5d5d5d;white-space:nowrap">可用资金：0元</div>
  <div class="abs" style="left:20px;top:188.5px;width:12px;height:12px;background:#2d8cf0;border-radius:2px"><svg width="12" height="12" viewBox="0 0 12 12" style="display:block"><path d="M2.6 6.2L5 8.6 9.6 3.6" fill="none" stroke="#fff" stroke-width="1.6"/></svg></div>
  <div class="abs" style="left:41px;top:184px;line-height:20px;font-size:12px;color:#aaa;white-space:nowrap">我同意 <span style="color:#27a3c7">《交易风险揭示书》</span></div>
  <div class="abs" style="left:20px;top:207px;width:500px;height:30px;background:#7566bd;border-radius:3px;color:#fff;font-size:14px;line-height:30px;text-align:center">入仓</div>

  <div class="abs" style="left:582.5px;top:64px;width:1px;height:157px;background:#2c2c2c"></div>

  <div class="inp" style="left:617px;top:76px;width:165px"><b style="left:16px">0</b><em style="right:9px">手</em></div>
  <div class="inp" style="left:812px;top:76px;width:165px"><b style="left:16px">1</b><em style="right:9px">倍</em></div>
  <div class="abs lbl" style="left:617px;top:119px;line-height:20px">方向</div>
  <div class="rd w" style="left:677px;top:121.5px"></div><div class="abs" style="left:701px;top:119px;line-height:20px;color:#ccc">买涨</div>
  <div class="rd w" style="left:785px;top:121.5px"></div><div class="abs" style="left:809px;top:119px;line-height:20px;color:#ccc">买跌</div>
  <div class="abs" style="left:617px;top:138.5px;line-height:20px;font-size:13px;color:#98a1b3;white-space:nowrap"><span style="font-size:12px;color:#8a93a8">浮动盈亏：</span><span style="color:#c0262b">0</span>≈NaN CNY</div>
  <div class="abs" style="left:617px;top:160.5px;line-height:20px;font-size:13px;color:#555;white-space:nowrap"><span style="font-size:12px">总盈亏：</span>0≈NaN CNY</div>
  <div class="abs" style="left:617px;top:184px;width:11.5px;height:11.5px;background:#1f2433;border:1px solid #ddd;border-radius:2px"></div>
  <div class="abs" style="left:638px;top:179.5px;line-height:20px;font-size:12px;color:#aaa;white-space:nowrap">我同意 <span style="color:#27a3c7">《交易风险揭示书》</span></div>
  <div class="abs" style="left:617px;top:203px;width:390px;height:30px;background:#c41616;border-radius:3px;color:#fff;font-size:14px;line-height:30px;text-align:center">出仓</div>
</div>
<div id="ticker" class="abs" style="left:401px;top:912px;width:1157px;height:16px;background:#2e2e2e;overflow:hidden;font-size:12px;line-height:20px;color:#ccc;white-space:nowrap">
  <span class="abs" style="left:15px;top:5px">【通知公告】</span>
  <span class="abs" style="left:110px;top:5px">••明阳电路:国泰君安证券股份有限公司关于深圳明阳电路科技股份有限公司创业板向不特定对象发行可转换公司债</span>
  <span class="abs" style="left:724px;top:5px;color:#27a3c7">2023/2/22</span>
  <span class="abs" style="left:819px;top:5px">••明阳电路:国泰君安证券股份有限公司关于深圳明阳电路科技股份有限公司创业板向不特定对象发行可转换公司债</span>
</div>
<!-- RIGHT -->
<div id="right" class="abs" style="left:1561px;top:101px;width:354px;height:827px;background:#000;overflow:hidden;font-size:12px">
  <div class="or" style="top:11px;color:#5a5a5a"><span class="o1" style="font-weight:400;color:#5a5a5a">姓名</span><span class="o2">价格</span><span class="o3">成交量</span></div>
  <div class="or r" style="top:40.5px"><span class="o1">卖五</span><span class="o2">0.00</span><span class="o3">0</span></div>
  <div class="or r" style="top:68.5px"><span class="o1">卖四</span><span class="o2">0.00</span><span class="o3">0</span></div>
  <div class="or g" style="top:96.5px"><span class="o1">卖三</span><span class="o2">0.00</span><span class="o3">0</span></div>
  <div class="or r" style="top:124.5px"><span class="o1">卖二</span><span class="o2">0.00</span><span class="o3">0</span></div>
  <div class="or r" style="top:152.5px"><span class="o1">卖一</span><span class="o2">1835.89</span><span class="o3">0</span></div>
  <div class="abs" style="left:9px;top:177px;width:341px;height:30px;background:#2a3545;border-radius:3px;color:#fff;font-weight:700;text-align:center;line-height:32px;font-size:12px">现价 1835.59</div>
  <div class="or r" style="top:212.5px"><span class="o1">买一</span><span class="o2">1835.59</span><span class="o3">0</span></div>
  <div class="or r" style="top:240.5px"><span class="o1">买二</span><span class="o2">0.00</span><span class="o3">0</span></div>
  <div class="or g" style="top:268.5px"><span class="o1">买三</span><span class="o2">0.00</span><span class="o3">0</span></div>
  <div class="or r" style="top:296.5px"><span class="o1">买四</span><span class="o2">0.00</span><span class="o3">0</span></div>
  <div class="or r" style="top:324.5px"><span class="o1">买五</span><span class="o2">0.00</span><span class="o3">0</span></div>
  <div class="abs" style="left:0;top:348px;width:354px;height:3px;background:#222631"></div>
  <div class="abs" style="left:95px;top:376.5px;width:30px;height:1px;background:#444"></div><div class="abs" style="left:229px;top:376.5px;width:30px;height:1px;background:#444"></div>
  <div class="abs" style="left:0;top:366px;width:354px;text-align:center;font-size:14px;line-height:22px;color:#e4e4e4">交易历史记录</div>
  <div class="hi" style="top:398px"><div class="h1"><b>N亚通</b><span class="tg">603190</span></div><div class="h2"><span>现价：</span><em>39.130</em><u>涨跌幅：<i>买涨</i></u></div></div>
  <div class="hi" style="top:453px"><div class="h1"><b>中国通号</b><span class="tg">688009</span></div><div class="h2"><span>现价：</span><em>5.000</em><u>涨跌幅：<i>买涨</i></u></div></div>
  <div class="hi" style="top:508px"><div class="h1"><b>N亚通</b><span class="tg">603190</span></div><div class="h2"><span>现价：</span><em>39.130</em><u>涨跌幅：<i>买涨</i></u></div></div>
  <div class="hi" style="top:563px"><div class="h1"><b>N亚通</b><span class="tg">603190</span></div><div class="h2"><span>现价：</span><em>39.130</em><u>涨跌幅：<i>买涨</i></u></div></div>
  <div class="hi" style="top:618px"><div class="h1"><b>N亚通</b><span class="tg">603190</span></div><div class="h2"><span>现价：</span><em>39.130</em><u>涨跌幅：<i>买涨</i></u></div></div>
  <div class="hi" style="top:673px"><div class="h1"><b>N坤泰</b><span class="tg">001260</span></div><div class="h2"><span>现价：</span><em>0</em><u>涨跌幅：<i>买涨</i></u></div></div>
  <div class="hi" style="top:728px"><div class="h1"><b>N坤泰</b><span class="tg">001260</span></div><div class="h2"><span>现价：</span><em>30.100</em><u>涨跌幅：<i>买涨</i></u></div></div>
  <div class="hi" style="top:783px"><div class="h1"><b>亿道信息</b><span class="tg">001314</span></div><div class="h2"><span>现价：</span><em>0</em><u>涨跌幅：<i>买涨</i></u></div></div>
</div>
</body>
</html>
